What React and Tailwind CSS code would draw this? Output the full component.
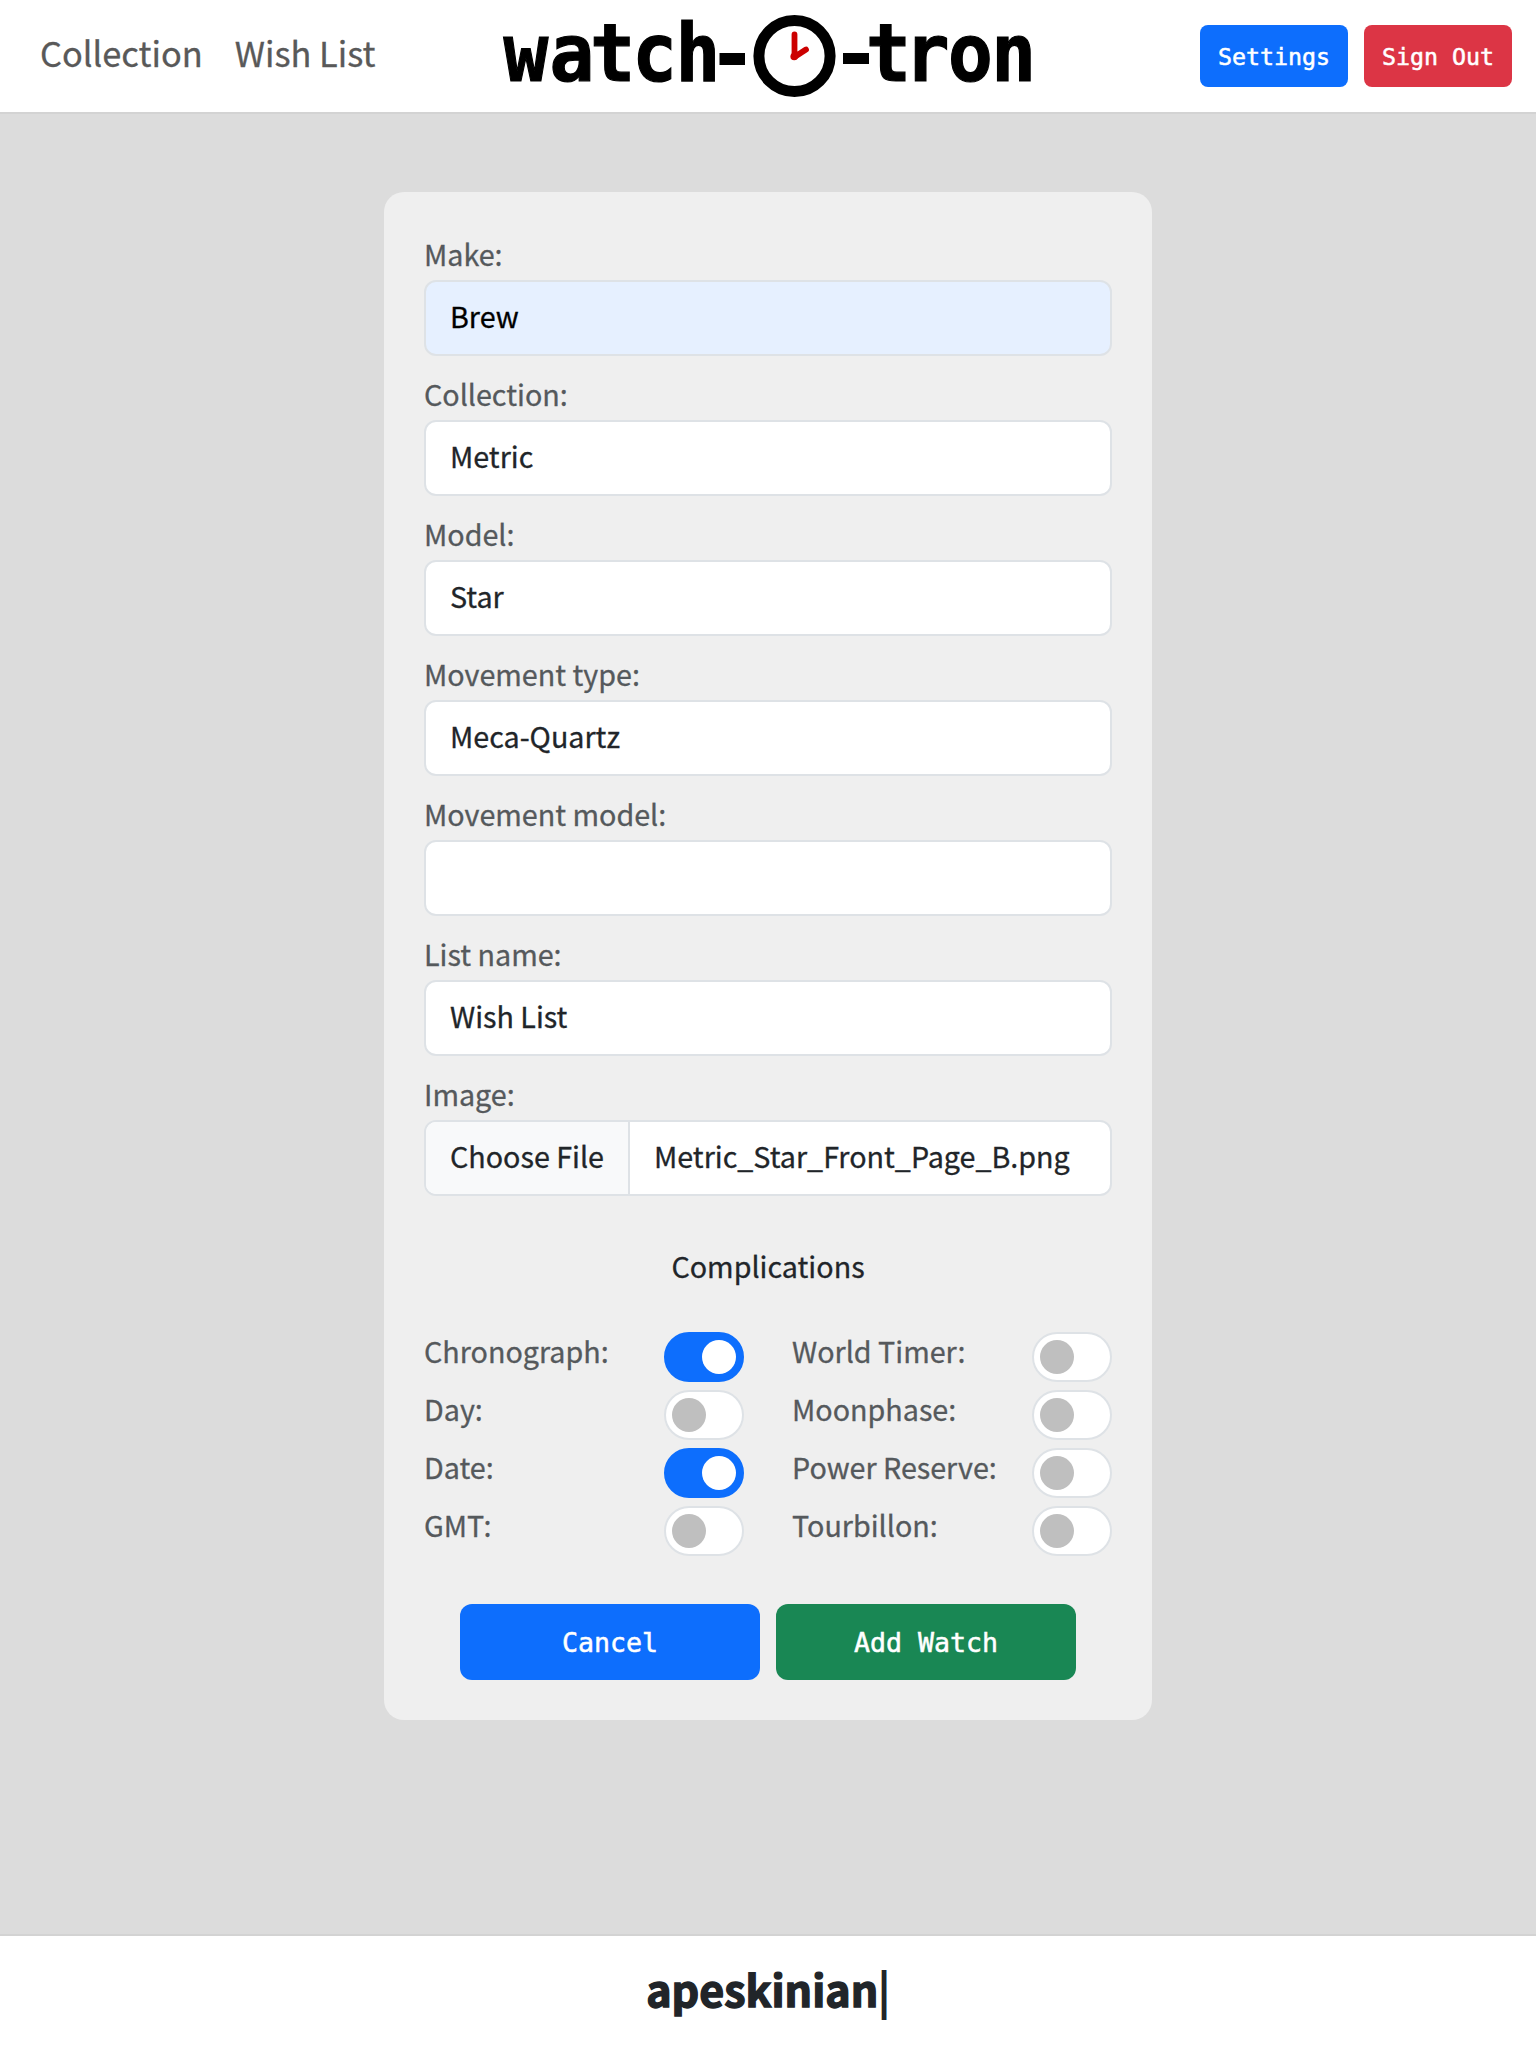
const fields = [
  { label: "Make:", value: "Brew", autofilled: true },
  { label: "Collection:", value: "Metric" },
  { label: "Model:", value: "Star" },
  { label: "Movement type:", value: "Meca-Quartz" },
  { label: "Movement model:", value: "" },
  { label: "List name:", value: "Wish List" },
];

const leftSwitches = [
  ["Chronograph:", true],
  ["Day:", false],
  ["Date:", true],
  ["GMT:", false],
];
const rightSwitches = [
  ["World Timer:", false],
  ["Moonphase:", false],
  ["Power Reserve:", false],
  ["Tourbillon:", false],
];

function Logo() {
  return (
    <svg width="532" height="112" viewBox="0 0 532 112" className="block shrink-0 overflow-visible">
      <g
        fill="#000"
        stroke="#000"
        strokeWidth="1.2"
        fontFamily="'DejaVu Sans Mono', monospace"
        fontWeight="700"
        fontSize="80"
        transform="translate(0 80.5) scale(0.93 1.01)"
      >
        <text x="1.5 51 95 140 186.5">watch</text>
        <text x="391.5 433 479.5 526">tron</text>
      </g>
      <rect x="217.5" y="53" width="25.5" height="12" />
      <rect x="341" y="53" width="26" height="11" />
      <circle cx="292.5" cy="56" r="35.6" fill="#fff" stroke="#000" strokeWidth="11" />
      <path d="M292.5 34.5V57L304 49.5" fill="none" stroke="#c00" strokeWidth="5.8" strokeLinecap="round" strokeLinejoin="round" />
      <circle cx="292.2" cy="56.5" r="3.8" fill="#c00" />
    </svg>
  );
}

function Switch({ on }) {
  return (
    <span
      className={
        on
          ? "flex h-[50px] w-20 items-center justify-end rounded-full border-2 border-[#0d6efd] bg-[#0d6efd] px-[5.75px]"
          : "flex h-[50px] w-20 items-center rounded-full border-2 border-[#dee2e6] bg-white px-[5.75px]"
      }
    >
      <span className={on ? "size-[34.5px] rounded-full bg-white" : "size-[34.5px] rounded-full bg-[#bfbfbf]"} />
    </span>
  );
}

function SwitchColumn({ items, className }) {
  return (
    <div className={className}>
      {items.map(([label, on]) => (
        <div key={label} className="flex h-[58px] justify-between">
          <span className="h-[38px] whitespace-nowrap leading-[38px] text-[#55595c]">{label}</span>
          <Switch on={on} />
        </div>
      ))}
    </div>
  );
}

export default function App() {
  return (
    <div className="flex h-[2048px] w-[1536px] flex-col overflow-hidden bg-[#dcdcdc] font-['Noto_Sans_CJK_SC',sans-serif] text-[28.7px] text-[#212529] [-webkit-text-stroke:0.3px]">
      <header className="flex h-[114px] shrink-0 border-b-2 border-[#d3d3d3] bg-white">
        <nav className="flex h-[106px] w-[502px] gap-8 pl-10 text-[34.4px] leading-[105px] text-[#595959]">
          <a>Collection</a>
          <a>Wish List</a>
        </nav>
        <Logo />
        <div className="flex flex-1 items-center justify-end gap-4 pr-6 font-['DejaVu_Sans_Mono',monospace] text-[23.3px] text-white [-webkit-text-stroke:0.5px]">
          <button className="h-[62px] w-[148px] rounded-lg bg-[#0d6efd] pt-0.5">Settings</button>
          <button className="h-[62px] w-[148px] whitespace-nowrap rounded-lg bg-[#dc3545] pt-0.5">Sign Out</button>
        </div>
      </header>

      <main className="flex-1 pt-[78px]">
        <form className="mx-auto h-[1528px] w-[768px] rounded-[20px] bg-[#efefef] px-10 pt-10">
          {fields.map((f) => (
            <div key={f.label} className="h-[140px]">
              <div className="h-12 leading-[44px] text-[#55595c]">{f.label}</div>
              <div
                className={
                  f.autofilled
                    ? "h-[76px] rounded-xl border-2 border-[#dee2e6] bg-[#e6f0ff] px-6 leading-[67px] text-black"
                    : "h-[76px] rounded-xl border-2 border-[#dee2e6] bg-white px-6 leading-[67px]"
                }
              >
                {f.value}
              </div>
            </div>
          ))}
          <div className="h-12 leading-[44px] text-[#55595c]">Image:</div>
          <div className="flex h-[76px] overflow-hidden rounded-xl border-2 border-[#dee2e6] bg-white leading-[67px]">
            <span className="w-[204px] shrink-0 whitespace-nowrap border-r-2 border-[#dee2e6] bg-[#f8f9fa] pl-6">Choose File</span>
            <span className="pl-6">Metric_Star_Front_Page_B.png</span>
          </div>
          <h2 className="mt-[48px] h-[48px] text-center leading-[44px]">Complications</h2>
          <div className="mt-10 flex justify-between">
            <SwitchColumn items={leftSwitches} className="w-80" />
            <SwitchColumn items={rightSwitches} className="w-80" />
          </div>
          <div className="mt-10 flex justify-center gap-4 font-['DejaVu_Sans_Mono',monospace] text-[26.6px] text-white [-webkit-text-stroke:0.5px]">
            <button type="button" className="h-[76px] w-[300px] rounded-xl bg-[#0d6efd] pt-0.5">Cancel</button>
            <button type="button" className="h-[76px] w-[300px] rounded-xl bg-[#198754] pt-0.5">Add Watch</button>
          </div>
        </form>
      </main>

      <footer className="h-[114px] shrink-0 border-t-2 border-[#d3d3d3] bg-white text-center text-[43px] font-bold leading-[104px] [-webkit-text-stroke:1.4px]">
        <span>apeskinian</span>
        <span className="font-normal [-webkit-text-stroke:2px]">|</span>
      </footer>
    </div>
  );
}
